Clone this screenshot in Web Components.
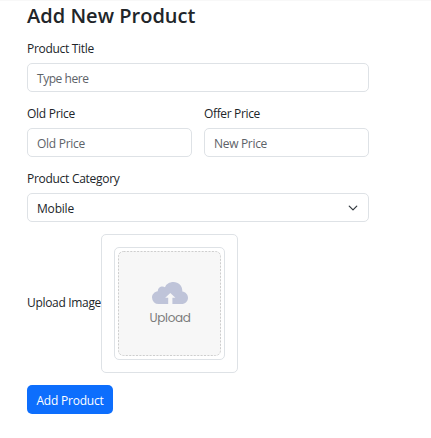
<!DOCTYPE html>
<html lang="en">
<head>
<meta charset="utf-8">
<title>Add New Product</title>
<style>
html{background:#fff}
body{margin:0;height:438px;overflow:hidden;font-family:"Open Sans","Noto Sans",sans-serif;font-size:12px;color:#212529}
</style>
</head>
<body>
<product-form></product-form>
<script>
const define=(name,html,ready)=>customElements.define(name,class extends HTMLElement{
  constructor(){super();this.attachShadow({mode:'open'}).innerHTML=html;}
  connectedCallback(){if(ready)ready(this);}
});

// A line of text tracked so that it fills the given advance width.
define('fit-text','<style>:host{display:inline-block;white-space:nowrap;line-height:18px}span{display:inline-block}</style><span><slot></slot></span>',el=>{
  const span=el.shadowRoot.querySelector('span');
  const target=parseFloat(el.getAttribute('width'));
  const natural=span.getBoundingClientRect().width;
  span.style.letterSpacing=((target-natural)/el.textContent.length)+'px';
});
define('form-field',`<style>
:host{display:flex;flex-direction:column;gap:5px;min-width:0}
.label{height:18px;display:flex;padding-top:1px}
.box{height:29px;box-sizing:border-box;border:1px solid #dee2e6;border-radius:5px;padding:2px 10px 0 9px;display:flex;align-items:center;justify-content:space-between;color:#5d6268;background:#fff}
:host([filled]) .box{color:#212529}
</style><div class="label"><slot name="label"></slot></div><div class="box"><slot></slot><slot name="icon"></slot></div>`);
define('chevron-icon',`<style>:host{display:block;width:10px;height:10px;margin-top:-2px}svg{display:block}</style>
<svg width="10" height="10" viewBox="0 0 16 16" fill="none" stroke="#343a40" stroke-width="2" stroke-linecap="round" stroke-linejoin="round"><path d="m2 5 6 6 6-6"/></svg>`);
define('upload-tile',`<style>
:host{display:flex;box-sizing:border-box;width:137px;height:139px;border:1px solid #dee2e6;border-radius:5px;padding:12px}
.frame{flex:1;border:1px solid #dee2e6;border-radius:5px;padding:3px;display:flex}
.drop{flex:1;border-radius:5px;background:#f7f7f7;display:grid}
svg{display:block;grid-area:1/1}
.content{grid-area:1/1;display:flex;flex-direction:column;align-items:center;padding:31px 0 0 1px;color:#7b7b7b}
.content svg{margin-bottom:5px}
</style>
<div class="frame"><div class="drop">
<svg width="103" height="105"><rect x=".5" y=".5" width="102" height="104" rx="5" fill="none" stroke="#cecece" stroke-dasharray="2 1.4"/></svg>
<div class="content">
<svg width="36" height="22" viewBox="0 0 36 22"><path fill="#bfc4d9" d="M6.5 22A6.5 6.5 0 0 1 0 15.6C0 12.4 2.5 9.8 5.8 9.3C5.8 6.4 8 4.5 10.4 4.5C11.4 4.5 12.3 4.8 13 5.3C14 2.1 17.4 0 21.5 0C26.6 0 30.3 3.7 30.3 8.5V9.4C33.6 9.9 36 12.5 36 15.7C36 19.2 33.2 22 29.6 22H20.4V15.7H23.4L18.3 10.9L13.2 15.7H16.2V22Z"/></svg>
<slot></slot></div></div></div>`);
define('primary-button',`<style>:host{display:block}button{display:flex;align-items:center;justify-content:center;width:86px;height:29px;border:0;border-radius:5px;padding:2px 0 0;background:#0d6efd;color:#fff;font:inherit}</style><button type="button"><slot></slot></button>`);
define('product-form',`<style>
:host{display:block;box-sizing:border-box;height:438px;border-top:1px solid #f8f8f8;padding:1px 62px 0 27px}
h1{margin:0;height:27px;font-size:20px;font-weight:550;line-height:27px}
h1 fit-text{line-height:27px}
form{display:flex;flex-direction:column;gap:12px;padding-top:10px}
.row{display:grid;grid-template-columns:165px 165px;gap:12px}
.upload{display:flex;align-items:center}
.upload>fit-text{flex:0 0 74px;width:74px;margin-top:-2px}
.cap{font-family:Poppins,"Open Sans",sans-serif}
</style>
<h1><fit-text width="168.5">Add New Product</fit-text></h1>
<form>
<form-field><fit-text slot="label" width="67">Product Title</fit-text><fit-text width="51.5">Type here</fit-text></form-field>
<div class="row">
<form-field><fit-text slot="label" width="48">Old Price</fit-text><fit-text width="48">Old Price</fit-text></form-field>
<form-field><fit-text slot="label" width="56">Offer Price</fit-text><fit-text width="53">New Price</fit-text></form-field>
</div>
<form-field filled><fit-text slot="label" width="92.5">Product Category</fit-text><fit-text width="37">Mobile</fit-text><chevron-icon slot="icon"></chevron-icon></form-field>
<div class="upload"><fit-text width="74">Upload Image</fit-text><upload-tile style="flex:none"><fit-text class="cap" width="41">Upload</fit-text></upload-tile></div>
<primary-button><fit-text width="67">Add Product</fit-text></primary-button>
</form>`);
</script>
</body>
</html>
